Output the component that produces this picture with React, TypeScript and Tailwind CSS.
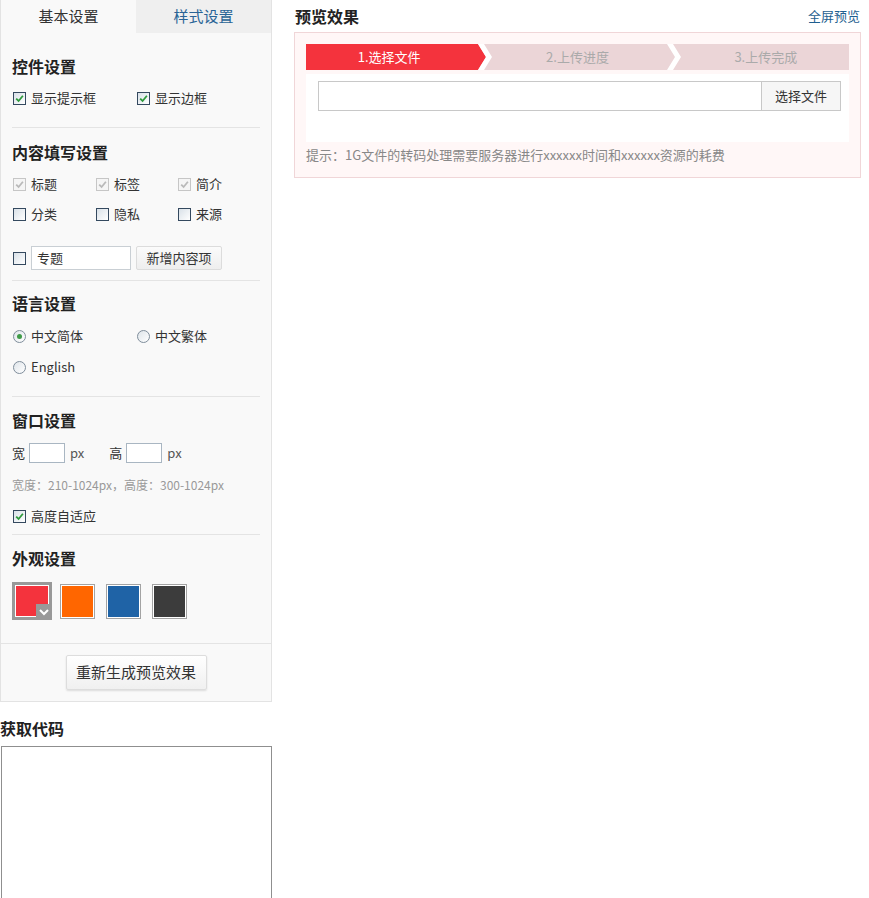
import React from 'react'

const Check = ({ checked, disabled }: { checked?: boolean; disabled?: boolean }) => (
  <span
    className={`inline-flex w-[13px] h-[13px] shrink-0 items-center justify-center border ${
      disabled ? 'border-[#c6c6c6] bg-[#f5f5f5]' : 'border-[#34495f] bg-linear-to-br from-[#d9e1e8] to-white'
    }`}
  >
    {checked && (
      <svg width="9" height="9" viewBox="0 0 9 9">
        <path d="M1.2 4.6 L3.6 7 L7.9 1.8" fill="none" stroke={disabled ? '#b9b9b9' : '#2e9a3c'} strokeWidth="1.8" />
      </svg>
    )}
  </span>
)

const Radio = ({ checked }: { checked?: boolean }) => (
  <span className="inline-flex w-[13px] h-[13px] shrink-0 items-center justify-center rounded-full border border-[#7f8d9b] bg-linear-to-br from-[#dfe5ea] to-white">
    {checked && <span className="w-[5px] h-[5px] rounded-full bg-[#3f9b48]" />}
  </span>
)

const CheckItem = ({ label, checked, disabled, w }: { label: string; checked?: boolean; disabled?: boolean; w: string }) => (
  <label className={`flex items-center gap-[5px] ${w}`}>
    <Check checked={checked} disabled={disabled} />
    <span>{label}</span>
  </label>
)

const RadioItem = ({ label, checked, w }: { label: string; checked?: boolean; w: string }) => (
  <label className={`flex items-center gap-[5px] ${w}`}>
    <Radio checked={checked} />
    <span>{label}</span>
  </label>
)

const Heading = ({ children }: { children: React.ReactNode }) => (
  <h3 className="text-[16px] font-bold leading-[20px] text-[#222]">{children}</h3>
)

const Divider = () => <div className="mx-[11px] border-t border-[#e4e4e4]" />

const swatches = ['#ff6600', '#1f63a6', '#3c3c3c']

const StepSep = ({ first }: { first?: boolean }) => (
  <svg width="22" height="26" viewBox="0 0 22 26" className="shrink-0">
    {first && <polygon points="0,0 6,0 14,13 6,26 0,26" fill="#f4333d" />}
    <polygon points="6,0 12,0 20,13 12,26 6,26 14,13" fill="#ffffff" />
  </svg>
)

export default function App() {
  return (
    <div
      className="flex w-[869px] min-h-[898px] bg-white text-[13px] text-[#333]"
      style={{ fontFamily: '"Noto Sans CJK SC", "Noto Sans", sans-serif' }}
    >
      {/* left column */}
      <div className="w-[272px] shrink-0">
        <div className="border border-t-0 border-[#e3e3e3] bg-[#f9f9f9]">
          <div className="flex h-[33px] text-[15px]">
            <div className="w-[135px] flex items-center justify-center text-[#333]">基本设置</div>
            <div className="flex-1 flex items-center justify-center bg-[#efefef] text-[#2a6496]">样式设置</div>
          </div>

          {/* 控件设置 */}
          <div className="px-[11px] pt-[23px] pb-[19px]">
            <Heading>控件设置</Heading>
            <div className="flex mt-[12px] h-[20px] pl-px">
              <CheckItem label="显示提示框" checked w="w-[124px]" />
              <CheckItem label="显示边框" checked w="w-[100px]" />
            </div>
          </div>
          <Divider />

          {/* 内容填写设置 */}
          <div className="px-[11px] pt-[14px] pb-[10px]">
            <Heading>内容填写设置</Heading>
            <div className="flex mt-[12px] h-[20px] pl-px">
              <CheckItem label="标题" checked disabled w="w-[83px]" />
              <CheckItem label="标签" checked disabled w="w-[82px]" />
              <CheckItem label="简介" checked disabled w="w-[70px]" />
            </div>
            <div className="flex mt-[10px] h-[20px] pl-px">
              <CheckItem label="分类" w="w-[83px]" />
              <CheckItem label="隐私" w="w-[82px]" />
              <CheckItem label="来源" w="w-[70px]" />
            </div>
            <div className="flex items-center mt-[22px] h-[24px] pl-px">
              <Check />
              <div className="ml-[5px] w-[100px] h-[24px] border border-[#c9cfd4] bg-white px-[5px] flex items-center">专题</div>
              <button className="ml-[5px] w-[86px] h-[24px] border border-[#dcdcdc] rounded-[2px] bg-linear-to-b from-[#fbfbfb] to-[#eeeeee] text-[13px] text-[#333]">
                新增内容项
              </button>
            </div>
          </div>
          <Divider />

          {/* 语言设置 */}
          <div className="px-[11px] pt-[12px] pb-[19px]">
            <Heading>语言设置</Heading>
            <div className="flex mt-[13px] h-[20px] pl-px">
              <RadioItem label="中文简体" checked w="w-[124px]" />
              <RadioItem label="中文繁体" w="w-[100px]" />
            </div>
            <div className="flex mt-[11px] h-[20px] pl-px">
              <RadioItem label="English" w="w-[124px]" />
            </div>
          </div>
          <Divider />

          {/* 窗口设置 */}
          <div className="px-[11px] pt-[13px] pb-[8px]">
            <Heading>窗口设置</Heading>
            <div className="flex items-center mt-[13px] h-[20px]">
              <span>宽</span>
              <div className="ml-[4px] w-[36px] h-[20px] border border-[#a9b6c2] bg-white" />
              <span className="ml-[5px] text-[#555]">px</span>
              <span className="ml-[25px]">高</span>
              <div className="ml-[4px] w-[36px] h-[20px] border border-[#a9b6c2] bg-white" />
              <span className="ml-[5px] text-[#555]">px</span>
            </div>
            <div className="mt-[12px] h-[20px] leading-[20px] text-[12px] text-[#999]">宽度：210-1024px，高度：300-1024px</div>
            <div className="flex mt-[11px] h-[20px] pl-px">
              <CheckItem label="高度自适应" checked w="w-[124px]" />
            </div>
          </div>
          <Divider />

          {/* 外观设置 */}
          <div className="px-[11px] pt-[13px] pb-[23px]">
            <Heading>外观设置</Heading>
            <div className="flex items-center gap-[8px] mt-[14px]">
              <div className="relative w-[40px] h-[38px] bg-[#999] p-[3px]">
                <div className="w-full h-full border border-white bg-[#f4333d]" />
                <div className="absolute right-0 bottom-0 w-[16px] h-[16px] bg-[#999] flex items-center justify-center">
                  <svg width="10" height="8" viewBox="0 0 10 8">
                    <path d="M1 2 L5 6 L9 2" fill="none" stroke="#fff" strokeWidth="2" />
                  </svg>
                </div>
              </div>
              {swatches.map((c, i) => (
                <div key={c} className={`w-[35px] h-[35px] border border-[#a3a3a3] bg-white p-px ${i > 0 ? 'ml-[3px]' : ''}`}>
                  <div className="w-full h-full" style={{ background: c }} />
                </div>
              ))}
            </div>
          </div>
          <div className="border-t border-[#e4e4e4]" />
          <div className="flex justify-center pt-[11px] pb-[11px]">
            <button className="w-[141px] h-[35px] border border-[#dddddd] rounded-[2px] bg-linear-to-b from-white to-[#f0f0f0] shadow-[0_1px_2px_rgba(0,0,0,0.12)] text-[15px] text-[#333]">
              重新生成预览效果
            </button>
          </div>
        </div>

        <div className="mt-[16px] text-[16px] font-bold leading-[20px] text-[#222]">获取代码</div>
        <textarea className="mt-[8px] ml-px block w-[271px] h-[170px] border border-[#8f8f8f] bg-white resize-none outline-none" />
      </div>

      {/* right column */}
      <div className="ml-[22px] w-[567px]">
        <div className="flex items-center justify-between h-[32px]">
          <span className="ml-px text-[16px] font-bold text-[#222]">预览效果</span>
          <a className="mr-px text-[13px] text-[#1f5f90]">全屏预览</a>
        </div>
        <div className="w-[567px] border border-[#f0d6d8] bg-[#fff7f7] px-[11px] pt-[11px] pb-[12px]">
          <div className="flex h-[26px] bg-[#ebd5d7] text-[13px]">
            <div className="flex-1 flex items-center justify-center bg-[#f4333d] text-white">1.选择文件</div>
            <StepSep first />
            <div className="flex-1 flex items-center justify-center text-[#aaa]">2.上传进度</div>
            <StepSep />
            <div className="flex-1 flex items-center justify-center text-[#aaa]">3.上传完成</div>
          </div>
          <div className="mt-[4px] bg-white pl-[12px] pr-[8px] pt-[7px] h-[68px]">
            <div className="flex h-[30px]">
              <div className="flex-1 border border-[#c8c8c8] border-r-0 bg-white" />
              <button className="w-[80px] h-[30px] border border-[#c8c8c8] bg-[#f6f6f6] text-[13px] text-[#333]">选择文件</button>
            </div>
          </div>
          <div className="mt-[3px] h-[20px] leading-[20px] text-[13px] text-[#888]">
            提示：1G文件的转码处理需要服务器进行xxxxxx时间和xxxxxx资源的耗费
          </div>
        </div>
      </div>
    </div>
  )
}
